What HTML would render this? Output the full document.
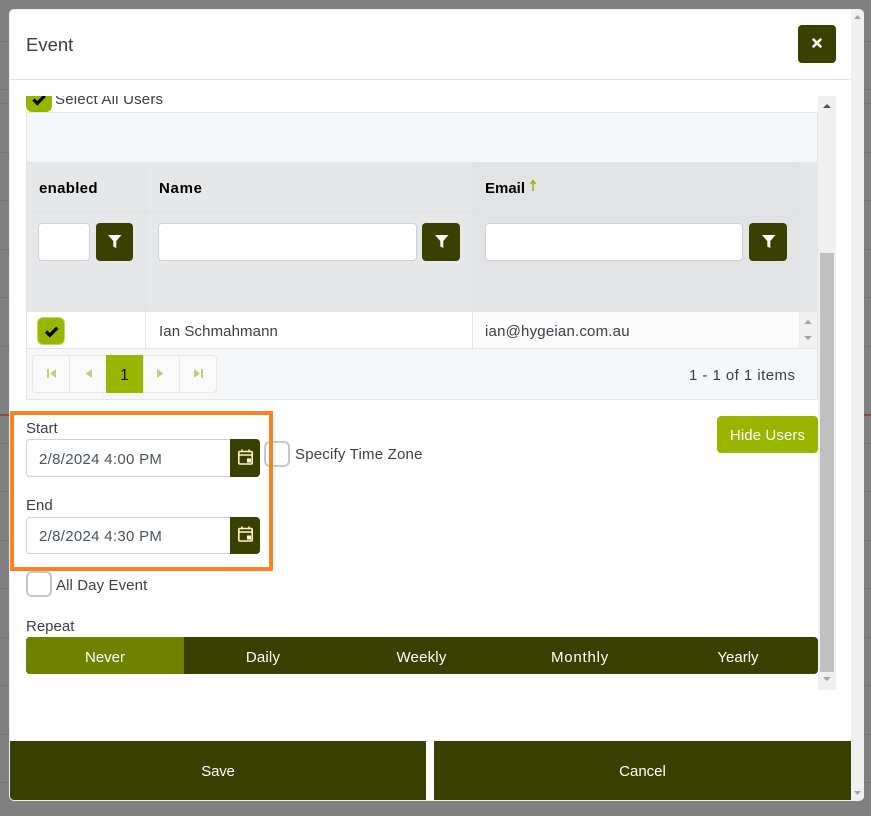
<!DOCTYPE html>
<html><head><meta charset="utf-8"><title>Event</title>
<style>
html,body{margin:0;padding:0}
body{width:871px;height:816px;overflow:hidden;position:relative;background:#808080;font-family:"Liberation Sans",sans-serif;font-size:15px;color:#3a4048}
div,span,svg{position:absolute;box-sizing:border-box}
.t{white-space:nowrap;line-height:20px}
.s{left:0;width:871px;height:1px;background:#737373}
.d{left:0;width:871px;height:0;border-top:1px dotted #6c6c6c}
.btn{background:#3a4000;border-radius:4px}
.inp{background:#fff;border:1px solid #ced1d6;border-radius:4px}
.cb{background:#fff;border:2px solid #c3c6cb;border-radius:6px;width:26px;height:26px}
.g{background:#9ab500;border-radius:6px}
.w{color:#fff}
.b{font-weight:bold;color:#000}
</style></head><body>
<div class="s" style="top:41px"></div><div class="s" style="top:89px"></div><div class="s" style="top:103px"></div>
<div class="d" style="top:152px"></div><div class="s" style="top:200px"></div><div class="d" style="top:249px"></div>
<div class="s" style="top:297px"></div><div class="d" style="top:346px"></div><div class="s" style="top:414px;height:2px;background:#8c4a4a"></div>
<div class="d" style="top:443px"></div><div class="s" style="top:491px"></div><div class="d" style="top:540px"></div>
<div class="s" style="top:588px"></div><div class="d" style="top:637px"></div><div class="s" style="top:685px"></div>
<div class="d" style="top:734px"></div><div class="s" style="top:782px"></div>

<!-- modal -->
<div style="left:9px;top:9px;width:855px;height:792px;background:#fff;border-radius:5px;overflow:hidden;border:1px solid #f2f2f2"></div>
<div style="left:851px;top:10px;width:13px;height:790px;background:#f0f0f0;border-radius:0 4px 4px 0"></div>
<svg style="left:851px;top:10px" width="13" height="790"><path d="M3 9l3.500-4 3.500 4z" fill="#a3a3a3"/><path d="M3 781h7l-3.500 4z" fill="#a3a3a3"/></svg>

<span class="t" style="left:26px;top:34px;font-size:18.500px;color:#3a4048;line-height:22px">Event</span>
<div style="left:10px;top:79px;width:841px;height:1px;background:#e3e3e3"></div>
<div class="btn" style="left:798px;top:25px;width:38px;height:38px"></div>
<svg style="left:798px;top:25px" width="38" height="38"><path d="M15.500 14.500l7 7M22.500 14.500l-7 7" stroke="#fff" stroke-width="2.600" stroke-linecap="round"/></svg>

<!-- inner scrollbar -->
<div style="left:818px;top:96px;width:18px;height:594px;background:#f0f0f0"></div>
<div style="left:820px;top:253px;width:14px;height:419px;background:#c0c0c0"></div>
<svg style="left:818px;top:96px" width="18" height="594"><path d="M5 12l4-4 4 4z" fill="#505050"/><path d="M5 581h8l-4 4z" fill="#a3a3a3"/></svg>

<!-- select all (clipped) -->
<div style="left:26px;top:96px;width:792px;height:16px;overflow:hidden">
  <div class="g" style="left:0;top:-10px;width:26px;height:26px"></div>
  <svg style="left:0;top:-10px" width="26" height="26"><path d="M7.500 13.500l3.800 3.800 7.500-7.500" fill="none" stroke="#000" stroke-width="3.200"/></svg>
  <span class="t" style="left:29px;top:-6px;letter-spacing:.2px">Select All Users</span>
</div>

<!-- grid -->
<div style="left:26px;top:112px;width:792px;height:288px;background:#f6f7f9;border:1px solid #e2e4e7"></div>
<div style="left:27px;top:162px;width:790px;height:1px;background:#e2e4e7"></div>
<div style="left:27px;top:163px;width:772px;height:148px;background:#e6e7e9"></div>
<div style="left:799px;top:163px;width:18px;height:148px;background:#e6e7e9"></div>
<div style="left:473px;top:163px;width:326px;height:148px;background:#e2e3e5"></div>
<div style="left:27px;top:211px;width:772px;height:1px;background:#dfe1e4"></div>
<div style="left:145px;top:163px;width:1px;height:148px;background:#dfe1e4"></div>
<div style="left:472px;top:163px;width:1px;height:148px;background:#dfe1e4"></div>
<div style="left:799px;top:163px;width:1px;height:148px;background:#dfe1e4"></div>
<span class="t b" style="left:39px;top:179px;letter-spacing:.3px">enabled</span>
<span class="t b" style="left:159px;top:179px;letter-spacing:.7px">Name</span>
<span class="t b" style="left:485px;top:179px">Email</span>
<svg style="left:528px;top:179px" width="10" height="14"><path d="M5 12V2M2.500 5L5 1.500 7.500 5" fill="none" stroke="#9ab500" stroke-width="1.500"/></svg>

<div class="inp" style="left:38px;top:223px;width:52px;height:38px"></div>
<div class="btn" style="left:96px;top:223px;width:37px;height:38px"></div>
<div class="inp" style="left:158px;top:223px;width:259px;height:38px"></div>
<div class="btn" style="left:422px;top:223px;width:38px;height:38px"></div>
<div class="inp" style="left:485px;top:223px;width:258px;height:38px"></div>
<div class="btn" style="left:749px;top:223px;width:38px;height:38px"></div>
<svg style="left:96px;top:223px" width="37" height="38"><path d="M12 12h13.500l-5.200 6v7l-3-1.500V18z" fill="#fff"/></svg>
<svg style="left:422px;top:223px" width="38" height="38"><path d="M13 12h13.500l-5.200 6v7l-3-1.500V18z" fill="#fff"/></svg>
<svg style="left:749px;top:223px" width="38" height="38"><path d="M13 12h13.500l-5.200 6v7l-3-1.500V18z" fill="#fff"/></svg>

<!-- row -->
<div style="left:27px;top:311px;width:790px;height:38px;background:#fff;border-top:1px solid #e2e4e7;border-bottom:1px solid #e2e4e7"></div>
<div style="left:473px;top:312px;width:326px;height:36px;background:#fbfbfb"></div>
<div style="left:145px;top:312px;width:1px;height:36px;background:#e2e4e7"></div>
<div style="left:472px;top:312px;width:1px;height:36px;background:#e2e4e7"></div>
<div style="left:799px;top:312px;width:18px;height:36px;background:#f0f0f0"></div>
<svg style="left:799px;top:312px" width="18" height="36"><path d="M5 12l4-4 4 4z" fill="#a3a3a3"/><path d="M5 24h8l-4 4z" fill="#a3a3a3"/></svg>
<div class="g" style="left:37px;top:317px;width:28px;height:28px;border:1px solid #c3d36a"></div>
<svg style="left:38px;top:317px" width="27" height="28"><path d="M8 14.500l3.800 3.800 7.500-7.500" fill="none" stroke="#000" stroke-width="3.200"/></svg>
<span class="t" style="left:159px;top:322px;letter-spacing:.1px">Ian Schmahmann</span>
<span class="t" style="left:485px;top:322px;letter-spacing:.2px">ian@hygeian.com.au</span>

<!-- pager -->
<div style="left:32px;top:355px;width:185px;height:38px;background:#fafafa;border:1px solid #e6e7e9;border-radius:4px"></div>
<div style="left:69px;top:356px;width:1px;height:36px;background:#e6e7e9"></div>
<div style="left:179px;top:356px;width:1px;height:36px;background:#e6e7e9"></div>
<div style="left:143px;top:356px;width:1px;height:36px;background:#e6e7e9"></div>
<div style="left:106px;top:355px;width:37px;height:38px;background:#9ab500"></div>
<span class="t" style="left:106px;top:366px;width:37px;text-align:center;color:#111;font-size:16px">1</span>
<svg style="left:32px;top:355px" width="185" height="38"><g fill="#bfd07a"><path d="M15 14h2v9h-2zM24 14v9l-6-4.500z"/><path d="M60 14v9l-6.500-4.500z"/><path d="M125 14v9l6.500-4.500z"/><path d="M162 14v9l6-4.500zM169 14h2v9h-2z"/></g></svg>
<span class="t" style="left:689px;top:366px;letter-spacing:.45px">1 - 1 of 1 items</span>

<!-- hide users -->
<div class="g" style="left:717px;top:416px;width:101px;height:37px;border-radius:4px"></div>
<span class="t w" style="left:717px;top:426px;width:101px;text-align:center;letter-spacing:.1px">Hide Users</span>

<!-- date -->
<span class="t" style="left:26px;top:419px">Start</span>
<div class="inp" style="left:26px;top:439px;width:234px;height:38px"></div>
<div style="left:230px;top:439px;width:30px;height:38px;background:#3a4000;border-radius:0 4px 4px 0"></div>
<span class="t" style="left:39px;top:450px;letter-spacing:.3px;color:#4a5260">2/8/2024 4:00 PM</span>
<span class="t" style="left:26px;top:496px">End</span>
<div class="inp" style="left:26px;top:517px;width:234px;height:37px"></div>
<div style="left:230px;top:517px;width:30px;height:37px;background:#3a4000;border-radius:0 4px 4px 0"></div>
<span class="t" style="left:39px;top:527px;letter-spacing:.3px;color:#4a5260">2/8/2024 4:30 PM</span>
<svg style="left:230px;top:439px" width="30" height="38"><g fill="none" stroke="#fff6c0" stroke-width="1.600"><rect x="8.800" y="12.500" width="13.400" height="12.500" rx="1"/><path d="M8.800 16h13.400M12 10.500v3M19 10.500v3"/></g><rect x="17" y="19.500" width="4" height="4" fill="#fff"/></svg>
<svg style="left:230px;top:517px" width="30" height="37"><g fill="none" stroke="#fff6c0" stroke-width="1.600"><rect x="8.800" y="11.500" width="13.400" height="12.500" rx="1"/><path d="M8.800 15h13.400M12 9.500v3M19 9.500v3"/></g><rect x="17" y="18.500" width="4" height="4" fill="#fff"/></svg>

<div class="cb" style="left:264px;top:441px"></div>
<span class="t" style="left:295px;top:445px;letter-spacing:.2px">Specify Time Zone</span>

<!-- orange highlight -->
<div style="left:10px;top:411px;width:263px;height:160px;border:4px solid #fd8124"></div>

<div class="cb" style="left:26px;top:571px"></div>
<span class="t" style="left:56px;top:576px;letter-spacing:.1px">All Day Event</span>

<span class="t" style="left:26px;top:617px">Repeat</span>
<div style="left:26px;top:637px;width:792px;height:37px;background:#3a4000;border-radius:4px;overflow:hidden">
  <div style="left:0;top:0;width:158px;height:37px;background:#6f8200"></div>
</div>
<span class="t w" style="left:26px;top:648px;width:158px;text-align:center">Never</span>
<span class="t w" style="left:184px;top:648px;width:158px;text-align:center;letter-spacing:.2px">Daily</span>
<span class="t w" style="left:342px;top:648px;width:159px;text-align:center;letter-spacing:.2px">Weekly</span>
<span class="t w" style="left:501px;top:648px;width:158px;text-align:center;letter-spacing:.8px">Monthly</span>
<span class="t w" style="left:659px;top:648px;width:158px;text-align:center">Yearly</span>

<!-- footer -->
<div style="left:10px;top:741px;width:416px;height:59px;background:#3a4000;border-radius:0 0 0 4px"></div>
<div style="left:434px;top:741px;width:417px;height:59px;background:#3a4000"></div>
<span class="t w" style="left:10px;top:762px;width:416px;text-align:center;letter-spacing:-.2px">Save</span>
<span class="t w" style="left:434px;top:762px;width:417px;text-align:center">Cancel</span>
</body></html>
